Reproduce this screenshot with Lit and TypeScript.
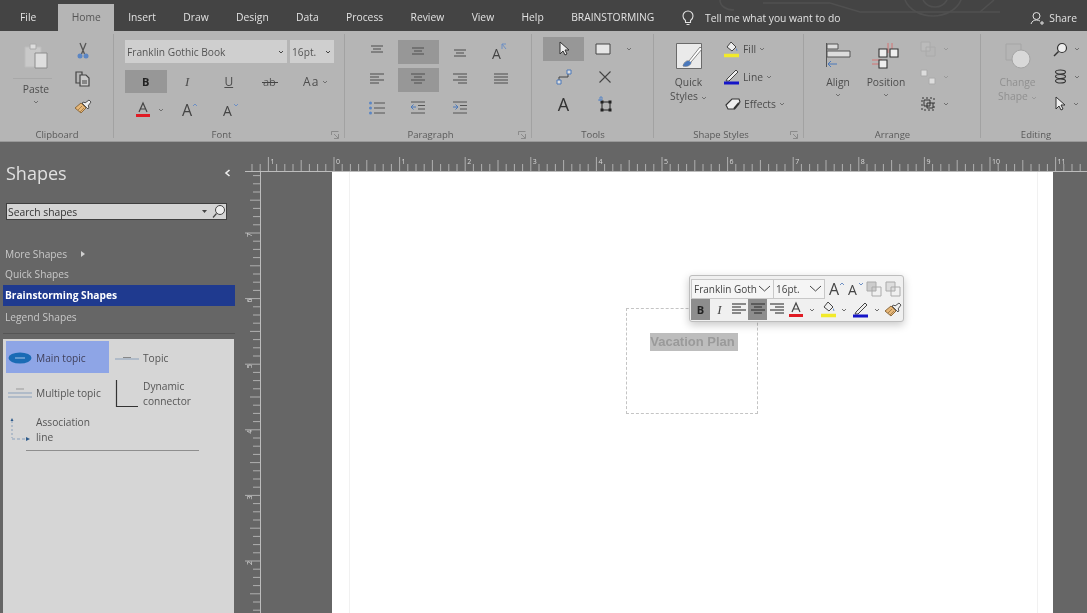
import { LitElement, html, svg, css } from 'lit';
import { customElement } from 'lit/decorators.js';

const chev = (c = '#707070') => html`<svg class="chev" width="6" height="4" viewBox="0 0 6 4"><path d="M1 1l2 2 2-2" fill="none" stroke=${c} stroke-width="1"/></svg>`;

const lines = (rows: number[][], c = '#555') => html`<svg width="18" height="16" viewBox="0 0 18 16">
  ${rows.map(r => svg`<path d="M${r[0]} ${r[2]}H${r[1]}" stroke=${c} stroke-width="1.1"/>`)}
</svg>`;

const alignIcons = {
    top: [[3, 15, 2], [5, 13, 5], [3, 15, 8]],
    mid: [[3, 15, 4], [5, 13, 7], [3, 15, 10]],
    bot: [[3, 15, 6], [5, 13, 9], [3, 15, 12]],
    left: [[2, 16, 2], [2, 11, 5], [2, 16, 8], [2, 11, 11]],
    center: [[2, 16, 2], [5, 13, 5], [2, 16, 8], [5, 13, 11]],
    right: [[2, 16, 2], [7, 16, 5], [2, 16, 8], [7, 16, 11]],
    just: [[2, 16, 2], [2, 16, 5], [2, 16, 8], [2, 16, 11]]
};

const scissors = html`<svg width="16" height="18" viewBox="0 0 16 18"><path d="M5 1l4.500 11M11 1L6.500 12" stroke="#555" stroke-width="1.300" fill="none"/><circle cx="5" cy="14" r="2.500" fill="#5b86c4"/><circle cx="11" cy="14" r="2.500" fill="#5b86c4"/></svg>`;
const copy = html`<svg width="18" height="18" viewBox="0 0 18 18"><path d="M2 2h6v11H2z" fill="none" stroke="#444" stroke-width="1.200"/><path d="M6 5h6l3 3v8H6z" fill="#c9c9c9" stroke="#444" stroke-width="1.200"/><path d="M8 11h5M8 13h5" stroke="#444"/></svg>`;
const brush = html`<svg width="18" height="16" viewBox="0 0 18 16"><path d="M1 9l6-5 5 5-5 5z" fill="#e7b777" stroke="#8c6a3e"/><path d="M4 11l4-4M6 13l4-4" stroke="#8c6a3e" stroke-width=".7"/><path d="M8 4l2-1 1 1 4-3 2 2-3 4 1 1-1 2z" fill="#eee" stroke="#444" stroke-width=".9"/></svg>`;
const fontA = (c: string) => html`<svg width="16" height="18" viewBox="0 0 16 18"><path d="M4 11l4-9 4 9M5.400 8h5.200" fill="none" stroke="#444" stroke-width="1.200"/><path d="M1 14.500h14" stroke=${c} stroke-width="3"/></svg>`;
const growA = (size: number, up: boolean) => html`<svg class="grow" width="20" height="24" viewBox="0 0 20 24"><text x="3" y="18" font-family="Open Sans" font-size=${size} fill="#444">A</text><path d=${up ? 'M14 8l2-2 2 2' : 'M14 6l2 2 2-2'} fill="none" stroke="#6d8fc4" stroke-width="1"/></svg>`;
const cursor = (f = '#eee') => html`<svg width="14" height="16" viewBox="0 0 14 16"><path d="M3 1v12l3-3 2 4 2-1-2-4h4z" fill=${f} stroke="#333" stroke-width="1"/></svg>`;
const fillIcon = (bar: string) => html`<svg width="17" height="17" viewBox="0 0 17 17"><path d="M8 1l5 5-4 4-5-4z" fill="#eee" stroke="#444"/><path d="M13 7c1 1 2 3 1 3s-1-2-1-3z" fill="#5b86c4"/><path d="M1 14.500h15" stroke=${bar} stroke-width="3.500"/></svg>`;
const penIcon = (bar: string) => html`<svg width="17" height="17" viewBox="0 0 17 17"><path d="M4 11L13 2l2 2-9 9-3 0z" fill="#eee" stroke="#444"/><path d="M1 15h15" stroke=${bar} stroke-width="3"/></svg>`;
const squares = (c: string) => html`<svg width="18" height="18" viewBox="0 0 18 18"><path d="M2 2h9v9H2z" fill=${c} stroke="#aaa"/><path d="M7 7h9v9H7z" fill="none" stroke="#aaa"/></svg>`;

@customElement('app-root')
export class AppRoot extends LitElement {
    static styles = css`
        :host { display: block; height: 613px; overflow: hidden; background: #666; font-family: "Open Sans", "Noto Sans", sans-serif; color: #444; filter: blur(.3px); }
        svg { display: block; }
        .chev { flex: none; }
        .grow { flex: none; }

        .titlebar { position: relative; height: 31px; background: #444; display: flex; align-items: flex-end; color: #e2e2e2; font-size: 10.300px; padding-left: 6px; overflow: hidden; }
        .circuit { position: absolute; left: 680px; top: 0; }
        .tab { position: relative; height: 27px; line-height: 27px; padding: 0 13.700px; white-space: nowrap; }
        .tab.file { margin-right: 8px; padding-left: 14px; }
        .tab.active { background: #b5b5b5; color: #555; }
        .tell { position: relative; display: flex; align-items: center; gap: 10px; height: 27px; margin-left: 13px; }
        .share { position: absolute; right: 10px; top: 4px; height: 27px; display: flex; align-items: center; gap: 5px; }

        .ribbon { display: flex; height: 111px; background: #b5b5b5; border-bottom: 1px solid #999; box-sizing: border-box; font-size: 10.300px; color: #4d4d4d; }
        .group { display: flex; flex-direction: column; box-sizing: border-box; position: relative; }
        .group::after { content: ''; position: absolute; right: 0; top: 3px; bottom: 3px; width: 1px; background: #a2a2a2; }
        .body { flex: 1; min-height: 0; }
        .glabel { height: 15px; line-height: 18px; font-size: 9.500px; display: grid; grid-template-columns: 1fr auto 1fr auto; color: #5a5a5a; }
        .glabel span { grid-column: 2; }
        .launcher { grid-column: 4; margin: 5px 6px 0 2px; }

        .clip { width: 114px; }
        .clip .body { display: grid; grid-template-columns: 72px 22px; }
        .paste { display: flex; flex-direction: column; align-items: center; padding-top: 12px; }
        .paste .rule { width: 39px; height: 1px; background: #a8a8a8; margin-top: 9px; }
        .paste .t { margin-top: 3px; line-height: 14px; }
        .paste .chev { margin-top: 4px; }
        .minis { display: grid; grid-template-rows: repeat(3, 28px); padding-top: 6px; justify-items: center; align-items: center; }

        .font { width: 231px; }
        .font .body { padding: 9px 0 0 11px; }
        .combos { display: flex; gap: 3px; }
        .combo { height: 23px; background: #cfcfcf; display: flex; align-items: center; justify-content: space-between; box-sizing: border-box; padding: 0 3px 0 2px; font-size: 10.200px; color: #555; }
        .combo.name { width: 162px; }
        .combo.size { width: 44px; }
        .fgrid { display: grid; grid-template-columns: repeat(5, 41.500px); grid-auto-rows: 23px; row-gap: 5px; margin-top: 7px; }
        .cell { display: flex; align-items: center; justify-content: center; gap: 3px; }
        .cell.on { background: #979797; }
        .cell.fc { justify-content: flex-start; padding-left: 10px; gap: 7px; }
        .cell.ac { padding-left: 8px; }
        .cell.gr { padding-left: 3px; }
        .b { font-weight: 700; font-size: 11px; color: #222; font-family: "Open Sans", sans-serif; }
        .i { font-style: italic; font-family: "Liberation Serif", serif; font-size: 13px; }
        .u { text-decoration: underline; font-size: 12px; }
        .aa { font-size: 12px; letter-spacing: 1px; }

        .para { width: 187px; }
        .para .body { padding: 9px 0 0 11px; display: grid; grid-template-columns: repeat(4, 41.500px); grid-auto-rows: 24px; row-gap: 4px; align-content: start; }

        .tools { width: 122px; }
        .tools .body { padding: 6px 0 0 11px; display: grid; grid-template-columns: 41px 41px 20px; grid-auto-rows: 24px; row-gap: 3.500px; align-content: start; }
        .tools .rect { padding-right: 4px; }
        .tools .dd { padding-right: 12px; }
        .bigA { font-size: 18px; color: #333; }

        .large { display: flex; flex-direction: column; align-items: center; padding-top: 12px; line-height: 14px; text-align: center; }
        .large .ic { height: 26px; margin-bottom: 6px; display: flex; align-items: center; }
        .large .chev { margin-top: 4px; }
        .tl { display: flex; align-items: center; gap: 3px; justify-content: center; }

        .styles { width: 150px; }
        .styles .body { display: grid; grid-template-columns: 69px 1fr; }
        .effs { display: grid; grid-auto-rows: 24px; row-gap: 3.500px; padding-top: 6px; align-content: start; }
        .eff { display: flex; align-items: center; gap: 3px; }

        .arrange { width: 177px; }
        .arrange .body { padding-left: 10px; display: grid; grid-template-columns: 48px 48px 60px; }
        .rows3 { display: grid; grid-auto-rows: 24px; row-gap: 3.500px; padding: 6px 0 0 9px; align-content: start; }
        .rowi { display: flex; align-items: center; gap: 6px; }

        .editing { width: 106px; }
        .editing::after { display: none; }
        .editing .glabel { padding-left: 4px; }
        .editing .body { padding-left: 10px; display: grid; grid-template-columns: 53px 40px; }
        .disabled { color: #909090; }

        .work { display: flex; height: 471px; }
        .side { width: 245px; flex: none; display: flex; flex-direction: column; color: #c8c8c8; font-size: 10.200px; padding-top: 17px; box-sizing: border-box; }
        .shead { display: flex; justify-content: space-between; align-items: center; padding: 0 4px 0 6px; width: 235px; box-sizing: border-box; height: 28px; }
        .stitle { font-size: 18px; color: #e0e0e0; }
        .search { margin: 17px 0 0 7px; width: 219px; height: 15px; background: #d4d4d4; display: flex; align-items: center; color: #333; font-size: 10.300px; padding-left: 1px; box-sizing: border-box; outline: 1px solid #3f3f3f; }
        .search span { flex: 1; }
        .search svg { margin-left: 4px; }
        .more { margin-top: 25px; }
        .sitem { height: 20px; line-height: 20px; padding-left: 5px; display: flex; align-items: center; gap: 14px; }
        .sel { margin: 1px 10px 0 3px; height: 21px; line-height: 21px; background: #1f3a8f; color: #fff; font-weight: 700; padding-left: 2px; }
        .legend { height: 22px; line-height: 22px; padding-left: 5px; }
        .rule { height: 1px; background: #555; margin: 5px 10px 0 3px; }
        .panel { margin: 5px 11px 0 3px; flex: 1; background: #d6d6d6; padding: 2px 3px; color: #555; }
        .stencils { display: grid; grid-template-columns: 103px 1fr; grid-template-rows: 32px 39px 33px; column-gap: 4px; }
        .st { display: flex; align-items: center; padding: 2px 0 0 2px; line-height: 15px; box-sizing: border-box; }
        .st .si { width: 28px; flex: none; }
        .st.on { background: #8ea5e6; color: #3f3f5a; }
        .prule { height: 1px; background: #8e8e8e; width: 173px; margin: 5px 0 0 20px; }

        .canvas { flex: 1; display: flex; flex-direction: column; padding-top: 15px; min-width: 0; }
        .rh { flex: none; }
        .below { flex: 1; display: flex; min-height: 0; }
        .rv { flex: none; }
        .area { flex: 1; padding: 0 34px 0 71px; min-width: 0; }
        .page { position: relative; height: 100%; background: #fff; }
        .margin { position: absolute; top: 0; bottom: 0; width: 0; border-left: 1px solid #f1f1f1; }
        .margin.l { left: 17px; }
        .margin.r { left: 705px; }
        .shape { position: absolute; left: 294px; top: 136px; width: 132px; height: 106px; box-sizing: border-box; border: 1px dashed #c4c4c4; display: flex; justify-content: center; align-items: flex-start; }
        .shape span { margin: 24px 0 0 4px; background: #bdbdbd; color: #9a9a9a; font: 700 13px/18px "Liberation Sans", sans-serif; padding: 0 3px 0 0; }
        .mini { position: absolute; left: 357px; top: 103px; width: 215px; height: 47px; box-sizing: border-box; background: #f0f0f0; border: 1px solid #bdbdbd; border-radius: 3px; box-shadow: 0 3px 9px rgba(0,0,0,.22); padding: 2px 1px; color: #444; font-size: 10px; }
        .mrow { display: flex; height: 21px; align-items: center; }
        .mc { height: 20px; box-sizing: border-box; border: 1px solid #c8c8c8; display: flex; align-items: center; justify-content: space-between; padding: 0 2px; background: #f5f5f5; white-space: nowrap; }
        .mc.n { width: 83px; }
        .mc.s { width: 52px; margin-left: -1px; }
        .mb { width: 19px; height: 21px; display: flex; align-items: center; justify-content: center; flex: none; }
        .mb.on { background: #8d8d8d; }
        .mb.d { width: 13.500px; }
        .mb.first { margin-left: 1px; }
        .effect-ic { margin-left: 2px; }
    `;

    private tabs = ['Insert', 'Draw', 'Design', 'Data', 'Process', 'Review', 'View', 'Help', 'BRAINSTORMING'];

    private renderRulerH() {
        const x0 = 89, unit = 65.6, ticks = [];
        for (let k = -11; k < 94; k++) {
            const x = x0 + (k * unit) / 8;
            if (x < 0) continue;
            const h = k % 8 === 0 ? 15 : k % 4 === 0 ? 11 : 7;
            ticks.push(svg`<path d="M${x} 14V${14 - h}" stroke="#b0b0b0"/>`);
        }
        const nums = [-1, 0, 1, 2, 3, 4, 5, 6, 7, 8, 9, 10, 11];
        return html`<svg class="rh" width="842" height="15" viewBox="0 0 842 15">
            <path d="M0 14.500H842" stroke="#bcbcbc"/>
            ${ticks}
            ${nums.map(n => svg`<text x=${x0 + n * unit + 2} y="7" font-size="7" fill="#d8d8d8" font-family="Open Sans">${Math.abs(n)}</text>`)}
        </svg>`;
    }

    private renderRulerV() {
        const unit = 65.6, y7 = 61, ticks = [];
        for (let k = -1; k < 55; k++) {
            const y = y7 - unit + (k * unit) / 8;
            if (y < 0) continue;
            const w = k % 8 === 0 ? 15 : k % 4 === 0 ? 10 : 7;
            ticks.push(svg`<path d="M15 ${y}H${15 - w}" stroke="#b0b0b0"/>`);
        }
        return html`<svg class="rv" width="16" height="441" viewBox="0 0 16 441">
            <path d="M15.500 0V441" stroke="#bcbcbc"/>
            ${ticks}
            ${[7, 6, 5, 4, 3, 2].map(n => {
                const y = y7 + (7 - n) * unit;
                return svg`<text transform="translate(7 ${y + 4}) rotate(-90)" font-size="7" fill="#d8d8d8" font-family="Open Sans">${n}</text>`;
            })}
        </svg>`;
    }

    private label(t: string, launcher = false) {
        return html`<div class="glabel"><span>${t}</span>${launcher ? html`<svg class="launcher" width="8" height="8" viewBox="0 0 8 8"><path d="M.5 4V.5H7.500M7.500 3v4.500H3M3 3l4 4" fill="none" stroke="#808080" stroke-width=".8"/></svg>` : ''}</div>`;
    }

    render() {
        return html`
            <div class="titlebar">
                <svg class="circuit" width="360" height="31" viewBox="0 0 360 31" fill="none" stroke="#505050" stroke-width="1.600">
                    <path d="M83 3H150l30 9H320"/>
                    <path d="M40 0c0 6 6 10 14 10"/>
                    <path d="M225 0c4 10 16 16 28 16s24-6 28-16"/>
                    <path d="M243 0c3 5 8 7 12 7s9-2 12-7"/>
                    <path d="M300 12l14-12"/>
                </svg>
                <div class="tab file">File</div>
                <div class="tab active">Home</div>
                ${this.tabs.map(t => html`<div class="tab">${t}</div>`)}
                <div class="tell">
                    <svg width="14" height="16" viewBox="0 0 14 16" fill="none" stroke="#e2e2e2" stroke-width="1.100"><path d="M4.500 10.500C3 9.500 2 8 2 6a5 5 0 0 1 10 0c0 2-1 3.500-2.500 4.500v2h-5zM5.500 14.500h3"/></svg>
                    <span>Tell me what you want to do</span>
                </div>
                <div class="share">
                    <svg width="14" height="14" viewBox="0 0 14 14" fill="none" stroke="#e2e2e2"><circle cx="6.500" cy="5" r="3.500"/><path d="M1 13c1-3 3-4 5.500-4 1.500 0 2.500.5 3.500 1M10 12h4M12 10v4"/></svg>
                    <span>Share</span>
                </div>
            </div>

            <div class="ribbon">
                <div class="group clip">
                    <div class="body">
                        <div class="paste">
                            <svg width="26" height="26" viewBox="0 0 26 26"><path d="M2 4h16v20H2z" fill="#c9c9c9" stroke="#bdbdbd"/><path d="M7 1h6v5H7z" fill="#ddd" stroke="#aaa"/><path d="M12 10h12v15H12z" fill="#dedede" stroke="#8c8c8c"/></svg>
                            <div class="rule"></div>
                            <div class="t">Paste</div>
                            ${chev()}
                        </div>
                        <div class="minis">${scissors}${copy}${brush}</div>
                    </div>
                    ${this.label('Clipboard')}
                </div>

                <div class="group font">
                    <div class="body">
                        <div class="combos">
                            <div class="combo name">Franklin Gothic Book ${chev('#444')}</div>
                            <div class="combo size">16pt. ${chev('#444')}</div>
                        </div>
                        <div class="fgrid">
                            <div class="cell on"><span class="b">B</span></div>
                            <div class="cell"><span class="i">I</span></div>
                            <div class="cell"><span class="u">U</span></div>
                            <div class="cell"><svg width="18" height="14" viewBox="0 0 18 14"><text x="2" y="11" font-size="11" fill="#555" font-family="Open Sans">ab</text><path d="M1 7.500h16" stroke="#444"/></svg></div>
                            <div class="cell ac"><span class="aa">Aa</span>${chev()}</div>
                            <div class="cell fc">${fontA('#e01b24')}${chev()}</div>
                            <div class="cell gr">${growA(16, true)}</div>
                            <div class="cell gr">${growA(14, false)}</div>
                        </div>
                    </div>
                    ${this.label('Font', true)}
                </div>

                <div class="group para">
                    <div class="body">
                        <div class="cell">${lines(alignIcons.top)}</div>
                        <div class="cell on">${lines(alignIcons.mid)}</div>
                        <div class="cell">${lines(alignIcons.bot)}</div>
                        <div class="cell"><svg width="20" height="20" viewBox="0 0 20 20"><text x="1" y="17" font-size="14" fill="#444" font-family="Open Sans">A</text><path d="M11 7V2h4M15 7L11 2" fill="none" stroke="#6d8fc4"/></svg></div>
                        <div class="cell">${lines(alignIcons.left)}</div>
                        <div class="cell on">${lines(alignIcons.center)}</div>
                        <div class="cell">${lines(alignIcons.right)}</div>
                        <div class="cell">${lines(alignIcons.just)}</div>
                        <div class="cell"><svg width="18" height="14" viewBox="0 0 18 14"><path d="M6 2h11M6 7h11M6 12h11" stroke="#555"/><circle cx="2.500" cy="2" r="1.500" fill="#5b86c4"/><circle cx="2.500" cy="7" r="1.500" fill="#5b86c4"/><circle cx="2.500" cy="12" r="1.500" fill="#5b86c4"/></svg></div>
                        <div class="cell"><svg width="18" height="14" viewBox="0 0 18 14"><path d="M2 1h14M9 4.500h7M9 8h7M2 12h14" stroke="#555"/><path d="M7 6H2M4.500 3.500L2 6l2.500 2.500" fill="none" stroke="#4a78bb"/></svg></div>
                        <div class="cell"><svg width="18" height="14" viewBox="0 0 18 14"><path d="M2 1h14M9 4.500h7M9 8h7M2 12h14" stroke="#555"/><path d="M2 6h5M4.500 3.500L7 6 4.500 8.500" fill="none" stroke="#4a78bb"/></svg></div>
                    </div>
                    ${this.label('Paragraph', true)}
                </div>

                <div class="group tools">
                    <div class="body">
                        <div class="cell on">${cursor()}</div>
                        <div class="cell rect"><svg width="16" height="12" viewBox="0 0 16 12"><path d="M1 1h14v10H1z" fill="#e6e6e6" stroke="#444"/></svg></div>
                        <div class="cell dd">${chev()}</div>
                        <div class="cell"><svg width="16" height="16" viewBox="0 0 16 16"><path d="M3 13V8h9V3" fill="none" stroke="#444"/><path d="M1 11h4v4H1zM11 1h4v4h-4z" fill="#ddd" stroke="#4a78bb"/></svg></div>
                        <div class="cell"><svg width="14" height="14" viewBox="0 0 14 14"><path d="M1.500 1.500l11 11M12.500 1.500l-11 11" stroke="#444" stroke-width="1.100"/></svg></div>
                        <div></div>
                        <div class="cell"><span class="bigA">A</span></div>
                        <div class="cell"><svg width="16" height="16" viewBox="0 0 16 16"><path d="M5 6h8v8H5z" fill="none" stroke="#222"/><path d="M3.500 4.500h3v3h-3zM11.500 4.500h3v3h-3zM3.500 12.500h3v3h-3zM11.500 12.500h3v3h-3z" fill="#222"/><path d="M1 4h4V1H3v4" fill="none" stroke="#5b86c4"/></svg></div>
                    </div>
                    ${this.label('Tools')}
                </div>

                <div class="group styles">
                    <div class="body">
                        <div class="large">
                            <div class="ic"><svg width="28" height="28" viewBox="0 0 28 28"><path d="M1.500 1.500h25v25h-25z" fill="#eaeaea" stroke="#6a6a6a"/><path d="M8 24c2-6 5-5 6-5L25 5l2 2-11 13c0 3-3 5-8 4z" fill="#fff" stroke="#555" stroke-width=".7"/><path d="M8 24c2-5 4-5 6-5l2 1c0 3-3 5-8 4z" fill="#4a78bb"/></svg></div>
                            <div>Quick</div>
                            <div class="tl">Styles ${chev()}</div>
                        </div>
                        <div class="effs">
                            <div class="eff">${fillIcon('#f2ea2a')}<span>Fill</span>${chev()}</div>
                            <div class="eff">${penIcon('#1515c8')}<span>Line</span>${chev()}</div>
                            <div class="eff"><svg class="effect-ic" width="16" height="14" viewBox="0 0 16 14"><path d="M1 8l6-6h7l1 3-6 7H3z" fill="#eee" stroke="#333" stroke-width="1.100"/><path d="M9 12l5-6" stroke="#333" stroke-width="2"/></svg><span>Effects</span>${chev()}</div>
                        </div>
                    </div>
                    ${this.label('Shape Styles', true)}
                </div>

                <div class="group arrange">
                    <div class="body">
                        <div class="large">
                            <div class="ic"><svg width="26" height="26" viewBox="0 0 26 26"><path d="M1.500 0v24" stroke="#555"/><path d="M2 1h11v5H2z" fill="#ddd" stroke="#555"/><path d="M2 8h23v6H2z" fill="#ddd" stroke="#555"/><path d="M3 21h9M6 18l-3 3 3 3" fill="none" stroke="#4a78bb"/></svg></div>
                            <div>Align</div>
                            ${chev()}
                        </div>
                        <div class="large">
                            <div class="ic"><svg width="28" height="26" viewBox="0 0 28 26"><path d="M16 0v10M20 0v10M0 17h10M0 21h10" stroke="#d66" stroke-width=".8"/><path d="M7 6h8v8H7zM18 6h8v8h-8zM7 17h8v8H7z" fill="#eee" stroke="#333" stroke-width="1.100"/></svg></div>
                            <div>Position</div>
                            ${chev()}
                        </div>
                        <div class="rows3">
                            <div class="rowi">${squares('#bbb')}${chev('#999')}</div>
                            <div class="rowi"><svg width="18" height="18" viewBox="0 0 18 18"><path d="M2 2h6v6H2zM10 10h6v6h-6z" fill="#ddd" stroke="#aaa"/></svg>${chev('#999')}</div>
                            <div class="rowi"><svg width="18" height="18" viewBox="0 0 18 18"><path d="M3 3h12v12H3z" fill="none" stroke="#333" stroke-dasharray="2 2"/><path d="M5 5h6v6H5zM8 8h6v5H8z" fill="none" stroke="#333"/></svg>${chev()}</div>
                        </div>
                    </div>
                    ${this.label('Arrange')}
                </div>

                <div class="group editing">
                    <div class="body">
                        <div class="large disabled">
                            <div class="ic"><svg width="28" height="28" viewBox="0 0 28 28"><path d="M2 2h15v16H2z" fill="none" stroke="#a5a5a5"/><circle cx="17" cy="17" r="9" fill="#d8d8d8" stroke="#a5a5a5"/></svg></div>
                            <div>Change</div>
                            <div class="tl">Shape ${chev('#999')}</div>
                        </div>
                        <div class="rows3">
                            <div class="rowi"><svg width="15" height="15" viewBox="0 0 15 15"><circle cx="9" cy="6" r="4.500" fill="#eee" stroke="#333" stroke-width="1.200"/><path d="M5.500 9.500L1 14" stroke="#333" stroke-width="1.500"/></svg>${chev()}</div>
                            <div class="rowi"><svg width="15" height="15" viewBox="0 0 15 15" fill="none" stroke="#333" stroke-width="1.100"><ellipse cx="7.500" cy="3" rx="5" ry="2"/><ellipse cx="7.500" cy="7.500" rx="5" ry="2"/><ellipse cx="7.500" cy="12" rx="5" ry="2"/></svg>${chev()}</div>
                            <div class="rowi">${cursor('#eee')}${chev()}</div>
                        </div>
                    </div>
                    ${this.label('Editing')}
                </div>
            </div>

            <div class="work">
                <div class="side">
                    <div class="shead">
                        <span class="stitle">Shapes</span>
                        <svg width="7" height="8" viewBox="0 0 7 8"><path d="M5.500 1L2 4l3.500 3" fill="none" stroke="#eee" stroke-width="1.600"/></svg>
                    </div>
                    <div class="search">
                        <span>Search shapes</span>
                        <svg width="5" height="3" viewBox="0 0 5 3"><path d="M0 0h5L2.500 3z" fill="#444"/></svg>
                        <svg width="15" height="15" viewBox="0 0 15 15"><circle cx="9" cy="6" r="4.500" fill="#eee" stroke="#444"/><path d="M5.500 9.500L2 13.500" stroke="#444" stroke-width="1.200"/></svg>
                    </div>
                    <div class="sitem more">More Shapes <svg width="4" height="6" viewBox="0 0 4 6"><path d="M0 0l4 3-4 3z" fill="#d0d0d0"/></svg></div>
                    <div class="sitem">Quick Shapes</div>
                    <div class="sel">Brainstorming Shapes</div>
                    <div class="legend">Legend Shapes</div>
                    <div class="rule"></div>
                    <div class="panel">
                        <div class="stencils">
                            <div class="st on">
                                <div class="si"><svg width="24" height="12" viewBox="0 0 24 12"><ellipse cx="12" cy="6" rx="11.500" ry="5.500" fill="#1a6bb5"/><path d="M7 6h10" stroke="#a7c6e8" stroke-width="1"/></svg></div>
                                Main topic
                            </div>
                            <div class="st">
                                <div class="si"><svg width="24" height="6" viewBox="0 0 24 6"><path d="M0 4h24" stroke="#8aa0bb"/><path d="M8 2.500h8" stroke="#888"/></svg></div>
                                Topic
                            </div>
                            <div class="st">
                                <div class="si"><svg width="24" height="12" viewBox="0 0 24 12"><path d="M8 1h8" stroke="#999"/><path d="M0 5h24M0 9h24" stroke="#8aa0bb"/></svg></div>
                                Multiple topic
                            </div>
                            <div class="st">
                                <div class="si"><svg width="23" height="28" viewBox="0 0 23 28"><path d="M1.500 0v26.500H23" fill="none" stroke="#333" stroke-width="1.200"/></svg></div>
                                <div>Dynamic<br />connector</div>
                            </div>
                            <div class="st">
                                <div class="si"><svg width="22" height="24" viewBox="0 0 22 24"><path d="M4 3v17" stroke="#8aa0bb" stroke-dasharray="2 2"/><path d="M4 21h15" stroke="#8aa0bb" stroke-dasharray="3 2"/><path d="M2.500 3L4 0l1.500 3zM18 19l4 2-4 2z" fill="#2d5a8a"/></svg></div>
                                <div>Association<br />line</div>
                            </div>
                        </div>
                        <div class="prule"></div>
                    </div>
                </div>

                <div class="canvas">
                    ${this.renderRulerH()}
                    <div class="below">
                        ${this.renderRulerV()}
                        <div class="area">
                            <div class="page">
                                <div class="margin l"></div>
                                <div class="margin r"></div>
                                <div class="shape"><span>Vacation Plan</span></div>
                                <div class="mini">
                                    <div class="mrow">
                                        <div class="mc n">Franklin Goth <svg width="13" height="7" viewBox="0 0 13 7"><path d="M1 1l5.500 5L12 1" fill="none" stroke="#444"/></svg></div>
                                        <div class="mc s">16pt. <svg width="13" height="7" viewBox="0 0 13 7"><path d="M1 1l5.500 5L12 1" fill="none" stroke="#444"/></svg></div>
                                        <div class="mb first">${growA(16, true)}</div>
                                        <div class="mb">${growA(14, false)}</div>
                                        <div class="mb">${squares('#ccc')}</div>
                                        <div class="mb">${squares('#ddd')}</div>
                                    </div>
                                    <div class="mrow">
                                        <div class="mb on"><span class="b">B</span></div>
                                        <div class="mb"><span class="i">I</span></div>
                                        <div class="mb">${lines(alignIcons.left, '#333')}</div>
                                        <div class="mb on">${lines(alignIcons.center, '#333')}</div>
                                        <div class="mb">${lines(alignIcons.right, '#333')}</div>
                                        <div class="mb">${fontA('#e01b24')}</div>
                                        <div class="mb d">${chev()}</div>
                                        <div class="mb">${fillIcon('#f2ea2a')}</div>
                                        <div class="mb d">${chev()}</div>
                                        <div class="mb">${penIcon('#1515c8')}</div>
                                        <div class="mb d">${chev()}</div>
                                        <div class="mb">${brush}</div>
                                    </div>
                                </div>
                            </div>
                        </div>
                    </div>
                </div>
            </div>
        `;
    }
}
